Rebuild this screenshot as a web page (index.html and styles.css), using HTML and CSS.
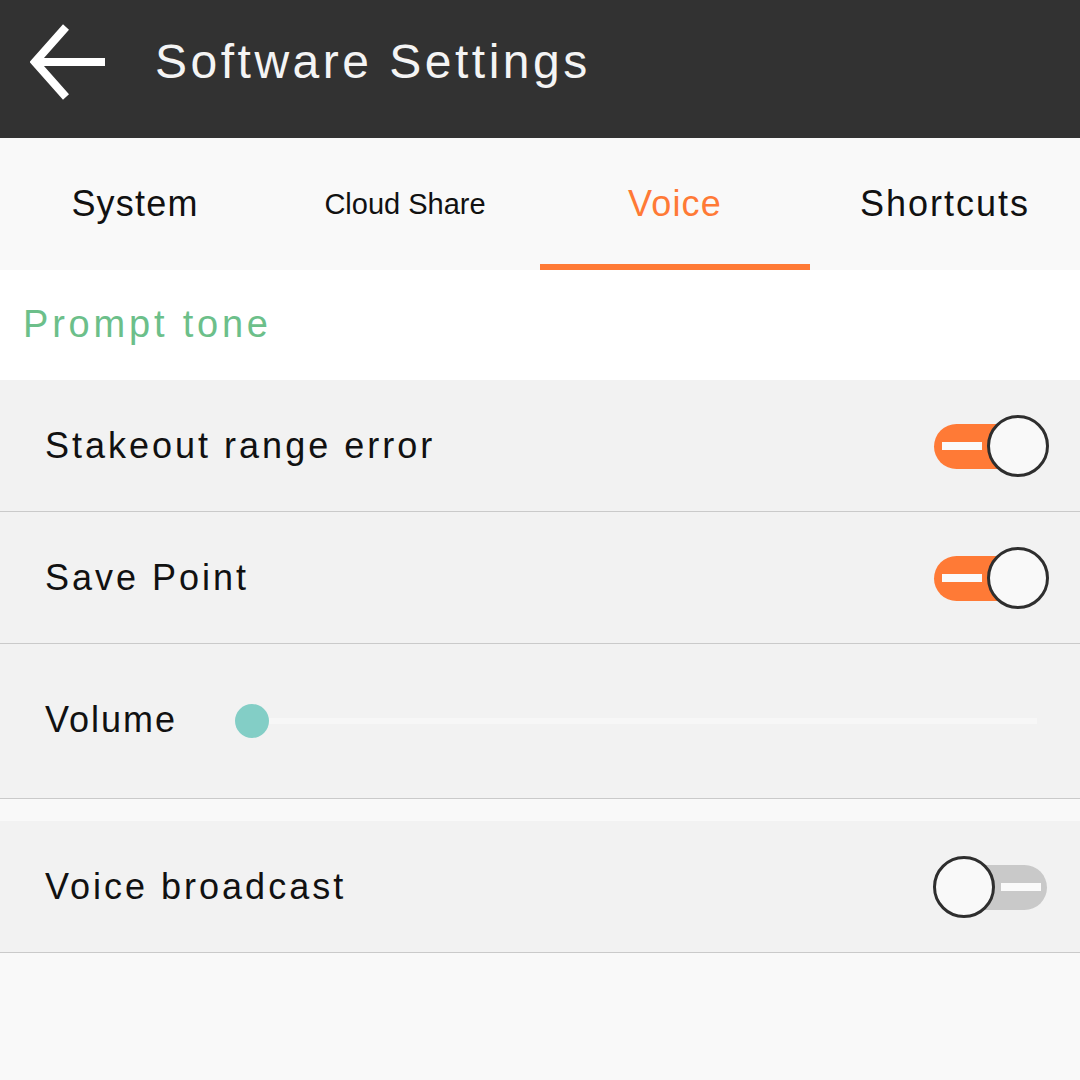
FILE: index.html
```html
<!DOCTYPE html>
<html lang="en">
<head>
    <meta charset="UTF-8">
    <meta name="viewport" content="width=device-width, initial-scale=1.0">
    <title>Software Settings</title>
    <link rel="stylesheet" href="styles.css">
</head>
<body>
    <div class="header">
        <svg class="back" width="76" height="78" viewBox="0 0 76 78">
            <path d="M75 39H8M36 4L5 39l31 35" fill="none" stroke="#fff" stroke-width="8"/>
        </svg>
        <div class="title">Software Settings</div>
    </div>

    <div class="tabs">
        <div class="tab">System</div>
        <div class="tab small">Cloud Share</div>
        <div class="tab active">Voice</div>
        <div class="tab wide">Shortcuts</div>
    </div>

    <div class="section">Prompt tone</div>

    <div class="row">
        <span class="label">Stakeout range error</span>
        <div class="switch on"><span class="dash"></span><span class="knob"></span></div>
    </div>
    <div class="row">
        <span class="label">Save Point</span>
        <div class="switch on"><span class="dash"></span><span class="knob"></span></div>
    </div>
    <div class="row tall">
        <span class="label">Volume</span>
        <div class="slider"><span class="thumb"></span><span class="track"></span></div>
    </div>
    <div class="spacer"></div>
    <div class="row">
        <span class="label">Voice broadcast</span>
        <div class="switch off"><span class="knob"></span><span class="dash"></span></div>
    </div>
</body>
</html>
```

FILE: styles.css
```css
*{
    box-sizing: border-box;
}
body{
    margin: 0;
    background-color: #f9f9f9;
    font-family: "Liberation Sans", Arial, sans-serif;
}
.header{
    height: 138px;
    background-color: #323232;
    display: flex;
    align-items: center;
    padding: 0 0 15px 30px;
}
.back{
    display: block;
}
.title{
    margin-left: 49px;
    color: #f4f4f4;
    font-size: 48px;
    letter-spacing: 3.5px;
}
.tabs{
    height: 132px;
    display: flex;
    background-color: #f9f9f9;
}
.tab{
    flex: 1;
    display: flex;
    align-items: center;
    justify-content: center;
    font-size: 36px;
    letter-spacing: 1.2px;
    color: #111;
    border-bottom: 6px solid transparent;
    padding-top: 6px;
}
.tab.small{
    font-size: 29px;
    letter-spacing: 0;
}
.tab.wide{
    letter-spacing: 2px;
}
.tab.active{
    color: #ff7a36;
    border-bottom-color: #ff7a36;
}
.section{
    height: 110px;
    background-color: #fff;
    color: #6cbf8a;
    font-size: 38px;
    letter-spacing: 3.8px;
    padding-left: 23px;
    display: flex;
    align-items: center;
    padding-bottom: 2px;
}
.row{
    height: 132px;
    background-color: #f2f2f2;
    border-bottom: 1px solid #cacaca;
    display: flex;
    align-items: center;
    padding: 0 31px 0 45px;
}
.row.tall{
    height: 155px;
    position: relative;
}
.label{
    font-size: 36px;
    letter-spacing: 3px;
    color: #111;
    flex: 1;
}
.spacer{
    height: 22px;
}
.switch{
    width: 116px;
    height: 62px;
    display: flex;
    align-items: center;
    position: relative;
}
.switch::before{
    content: "";
    position: absolute;
    left: 1px;
    right: 2px;
    top: 9px;
    bottom: 8px;
    border-radius: 23px;
    background-color: #ff7a36;
}
.switch.off::before{
    background-color: #c9c9c9;
}
.dash{
    position: relative;
    width: 40px;
    height: 8px;
    background-color: #fafafa;
    margin: 0 5px 0 9px;
}
.switch.off .dash{
    margin: 0 0 0 6px;
}
.knob{
    position: relative;
    width: 62px;
    height: 62px;
    border-radius: 50%;
    border: 3px solid #2e2e2e;
    background-color: #f9f9f9;
}
.slider{
    position: absolute;
    left: 235px;
    display: flex;
    align-items: center;
    width: 802px;
}
.thumb{
    width: 34px;
    height: 34px;
    border-radius: 50%;
    background-color: #83cec6;
    flex: none;
}
.track{
    flex: 1;
    height: 6px;
    background-color: #f7f7f7;
}
.row.tall .label{
    padding-bottom: 2px;
    letter-spacing: 2px;
}
```
